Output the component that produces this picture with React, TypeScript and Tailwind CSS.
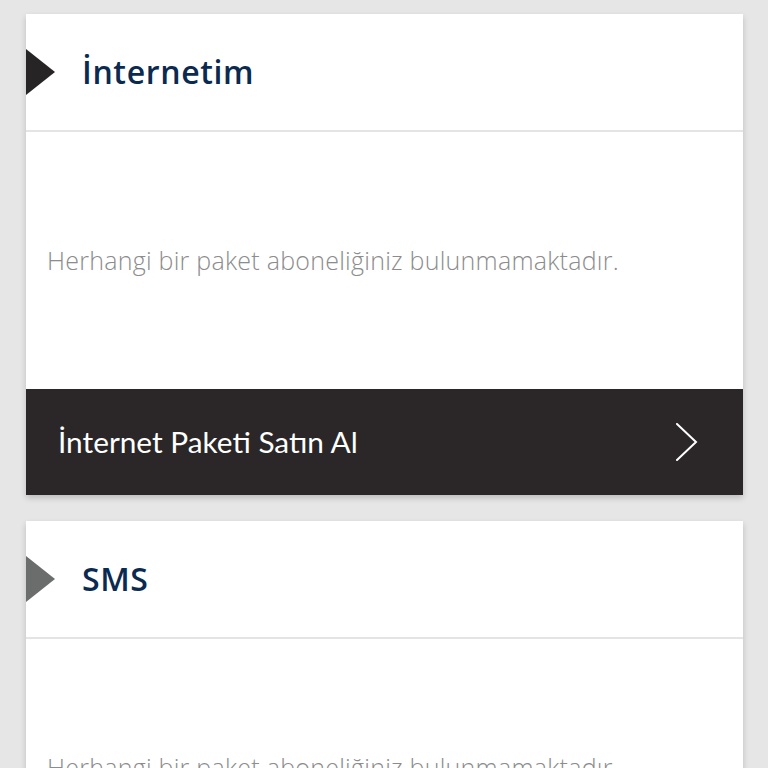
import { ReactNode } from 'react';

function PackageCard({
  title,
  markerColor,
  action,
}: {
  title: string;
  markerColor: string;
  action?: ReactNode;
}) {
  return (
    <section className="bg-white shadow-[0_3px_6px_rgba(0,0,0,0.18)]">
      <header className="relative flex h-[118px] items-center border-b-2 border-[#e4e4e4] pl-[56px]">
        <span
          className={`absolute top-1/2 left-0 h-0 w-0 -translate-y-1/2 border-y-[23px] border-l-[29px] border-y-transparent ${markerColor}`}
          aria-hidden="true"
        />
        <h2 className="font-['Open_Sans',sans-serif] text-[32px] font-semibold tracking-[0.02em] text-[#0b2a50]">
          {title}
        </h2>
      </header>
      <div className="flex h-[257px] items-center px-[21px]">
        <p className="font-['Open_Sans',sans-serif] text-[25px] font-light tracking-[0.01em] text-[#8c8c8c]">
          Herhangi bir paket aboneliğiniz bulunmamaktadır.
        </p>
      </div>
      {action}
    </section>
  );
}

export default function App() {
  return (
    <div className="min-h-[768px] overflow-hidden bg-[#e6e6e6] px-[26px] pt-[14px]">
      <div className="flex w-[717px] flex-col gap-[26px]">
        <PackageCard
          title="İnternetim"
          markerColor="border-l-[#262424]"
          action={
            <button
              type="button"
              className="flex h-[106px] w-full items-center justify-between bg-[#2b2728] pr-[44px] pl-[32px] text-left"
            >
              <span className="font-['Lato',sans-serif] text-[29.8px] font-normal text-white">
                İnternet Paketi Satın Al
              </span>
              <svg
                width="24"
                height="38"
                viewBox="0 0 24 38"
                fill="none"
                stroke="white"
                strokeWidth="2"
                strokeLinecap="round"
                aria-hidden="true"
              >
                <polyline points="2 1 21 19 2 37" />
              </svg>
            </button>
          }
        />
        <PackageCard title="SMS" markerColor="border-l-[#6b6d6d]" />
      </div>
    </div>
  );
}
